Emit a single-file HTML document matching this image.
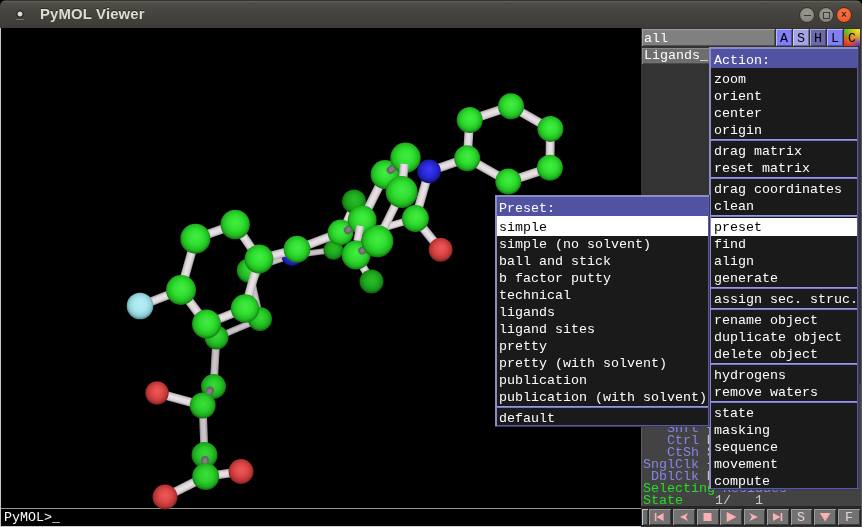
<!DOCTYPE html>
<html><head><meta charset="utf-8"><title>PyMOL Viewer</title>
<style>
html,body{margin:0;padding:0;background:#000;}
body{width:862px;height:527px;position:relative;overflow:hidden;font-family:"Liberation Mono",monospace;}
.t{will-change:transform;position:absolute;font-family:"Liberation Mono",monospace;font-size:13.333px;line-height:16px;height:16px;white-space:pre;letter-spacing:0;}
#title{position:absolute;left:0;top:0;width:862px;height:28px;background:linear-gradient(#35342f 0,#35342f 1px,#62615a 1px,#62615a 2px,#504f49 2px,#464540 40%,#3c3b37 100%);border-radius:6px 6px 0 0;}
#title .name{will-change:transform;position:absolute;left:40px;top:6px;font:bold 14.9px "Liberation Sans",sans-serif;color:#dfdbd2;letter-spacing:.15px;text-shadow:0 -1px 0 rgba(0,0,0,.4)}
.wb{will-change:transform;position:absolute;top:6.8px;width:16px;height:16px;border-radius:50%;box-sizing:border-box}
.mol{position:absolute;left:0;top:0}
#view{position:absolute;left:1px;top:28px;width:640px;height:480px;background:#000;overflow:hidden}
</style></head><body>
<div id="title">
  <div style="position:absolute;left:14px;top:7.6px;width:12px;height:12px;border-radius:50%;background:radial-gradient(circle at 50% 50%,#e4e4e0 0,#d6d6d2 24%,#2c2b28 34%,#2c2b28 41%,rgba(60,59,55,0) 49%)"></div>
  <div style="position:absolute;left:16px;top:18.6px;width:8px;height:1px;background:#9c9c96;opacity:.6;border-radius:1px"></div>
  <div class="name">PyMOL Viewer</div>
  <div class="wb" style="left:799.2px;background:radial-gradient(circle at 50% 35%,#9a9a92,#7c7c75);border:1px solid #33322e"><div style="position:absolute;left:3.5px;top:6.5px;width:7px;height:1px;background:#3c3b37"></div></div>
  <div class="wb" style="left:817.9px;background:radial-gradient(circle at 50% 35%,#9a9a92,#7c7c75);border:1px solid #33322e"><div style="position:absolute;left:3.5px;top:3.5px;width:5px;height:5px;border:1px solid #3c3b37"></div></div>
  <div class="wb" style="left:835.7px;background:radial-gradient(circle at 50% 35%,#f67a4c,#e9501f);border:1px solid #5c2410;color:#4a1a0a;font:bold 10px/14px 'Liberation Sans',sans-serif;text-align:center">×</div>
</div>
<div style="position:absolute;left:0;top:28px;width:1px;height:499px;background:#c4c4c4"></div>
<div style="position:absolute;left:0;top:526px;width:862px;height:1px;background:#cdcdcd"></div>
<div style="position:absolute;left:861px;top:28px;width:1px;height:499px;background:#5a5a5a"></div>
<div style="position:absolute;left:1px;top:508px;width:641px;height:1px;background:#969696"></div>
<svg class="mol" width="862" height="527" viewBox="0 0 862 527">
<defs>
<radialGradient id="gg" cx="0.5" cy="0.47" r="0.53" fx="0.52" fy="0.42"><stop offset="0" stop-color="#42ee42"/><stop offset="0.5" stop-color="#30de30"/><stop offset="0.8" stop-color="#20bc20"/><stop offset="1" stop-color="#127412"/></radialGradient>
<radialGradient id="ggn" cx="0.5" cy="0.47" r="0.53" fx="0.52" fy="0.42"><stop offset="0" stop-color="#3ae23a"/><stop offset="0.5" stop-color="#2cd02c"/><stop offset="0.8" stop-color="#1eae1e"/><stop offset="1" stop-color="#106a10"/></radialGradient>
<radialGradient id="ggm" cx="0.5" cy="0.47" r="0.53" fx="0.52" fy="0.42"><stop offset="0" stop-color="#36da36"/><stop offset="0.5" stop-color="#28c628"/><stop offset="0.8" stop-color="#1ba41b"/><stop offset="1" stop-color="#0e620e"/></radialGradient>
<radialGradient id="ggd" cx="0.5" cy="0.47" r="0.53" fx="0.52" fy="0.42"><stop offset="0" stop-color="#28be28"/><stop offset="0.5" stop-color="#1fac1f"/><stop offset="0.8" stop-color="#168e16"/><stop offset="1" stop-color="#0a540a"/></radialGradient>
<radialGradient id="gr" cx="0.5" cy="0.47" r="0.53" fx="0.52" fy="0.42"><stop offset="0" stop-color="#ee5a5a"/><stop offset="0.5" stop-color="#dc4646"/><stop offset="0.8" stop-color="#b83434"/><stop offset="1" stop-color="#742020"/></radialGradient>
<radialGradient id="gb" cx="0.5" cy="0.47" r="0.53" fx="0.52" fy="0.42"><stop offset="0" stop-color="#3a3af2"/><stop offset="0.5" stop-color="#2a2adc"/><stop offset="0.8" stop-color="#1e1eb4"/><stop offset="1" stop-color="#0e0e6c"/></radialGradient>
<radialGradient id="gc" cx="0.5" cy="0.47" r="0.53" fx="0.52" fy="0.42"><stop offset="0" stop-color="#b6f0f6"/><stop offset="0.5" stop-color="#a8e6ee"/><stop offset="0.8" stop-color="#8ccdd5"/><stop offset="1" stop-color="#52848a"/></radialGradient>
</defs>
<line x1="258" y1="267" x2="292.0" y2="255.5" stroke="#989296" stroke-width="6.00"/>
<line x1="258" y1="267" x2="292.0" y2="255.5" stroke="#bcb6ba" stroke-width="4.56"/>
<line x1="258" y1="267" x2="292.0" y2="255.5" stroke="#cbc5c9" stroke-width="2.40"/>
<line x1="253" y1="285" x2="259" y2="312" stroke="#989296" stroke-width="6.00"/>
<line x1="253" y1="285" x2="259" y2="312" stroke="#bcb6ba" stroke-width="4.56"/>
<line x1="253" y1="285" x2="259" y2="312" stroke="#cbc5c9" stroke-width="2.40"/>
<line x1="260.0" y1="319.0" x2="216.5" y2="337.5" stroke="#989296" stroke-width="6.50"/>
<line x1="260.0" y1="319.0" x2="216.5" y2="337.5" stroke="#bcb6ba" stroke-width="4.94"/>
<line x1="260.0" y1="319.0" x2="216.5" y2="337.5" stroke="#cbc5c9" stroke-width="2.60"/>
<line x1="216.5" y1="337.5" x2="213.5" y2="386.5" stroke="#989296" stroke-width="7.80"/>
<line x1="216.5" y1="337.5" x2="213.5" y2="386.5" stroke="#bcb6ba" stroke-width="5.93"/>
<line x1="216.5" y1="337.5" x2="213.5" y2="386.5" stroke="#cbc5c9" stroke-width="3.12"/>
<circle cx="249.0" cy="270.5" r="12.2" fill="url(#ggm)"/>
<circle cx="260.0" cy="319.0" r="12.0" fill="url(#ggm)"/>
<circle cx="216.5" cy="337.5" r="12.0" fill="url(#ggm)"/>
<circle cx="213.5" cy="386.5" r="12.5" fill="url(#ggm)"/>
<line x1="210" y1="390.5" x2="202.7" y2="405.5" stroke="#6a6468" stroke-width="8.0" stroke-linecap="round"/>
<line x1="210" y1="390.5" x2="202.7" y2="405.5" stroke="#847e82" stroke-width="4.0" stroke-linecap="round"/>
<line x1="157.0" y1="393.0" x2="202.7" y2="405.5" stroke="#b4acb0" stroke-width="8.80"/>
<line x1="157.0" y1="393.0" x2="202.7" y2="405.5" stroke="#d6ced2" stroke-width="6.69"/>
<line x1="157.0" y1="393.0" x2="202.7" y2="405.5" stroke="#e6e0e4" stroke-width="3.52"/>
<line x1="202.7" y1="405.5" x2="204.5" y2="455.0" stroke="#989296" stroke-width="7.80"/>
<line x1="202.7" y1="405.5" x2="204.5" y2="455.0" stroke="#bcb6ba" stroke-width="5.93"/>
<line x1="202.7" y1="405.5" x2="204.5" y2="455.0" stroke="#cbc5c9" stroke-width="3.12"/>
<circle cx="157.0" cy="393.0" r="11.7" fill="url(#gr)"/>
<circle cx="202.7" cy="405.5" r="13.0" fill="url(#ggn)"/>
<circle cx="204.5" cy="455.0" r="13.0" fill="url(#ggm)"/>
<line x1="205" y1="460" x2="205.7" y2="476.5" stroke="#6a6468" stroke-width="8.0" stroke-linecap="round"/>
<line x1="205" y1="460" x2="205.7" y2="476.5" stroke="#847e82" stroke-width="4.0" stroke-linecap="round"/>
<line x1="205.7" y1="476.5" x2="241.0" y2="471.5" stroke="#b4acb0" stroke-width="8.80"/>
<line x1="205.7" y1="476.5" x2="241.0" y2="471.5" stroke="#d6ced2" stroke-width="6.69"/>
<line x1="205.7" y1="476.5" x2="241.0" y2="471.5" stroke="#e6e0e4" stroke-width="3.52"/>
<line x1="205.7" y1="476.5" x2="165.0" y2="497.0" stroke="#b4acb0" stroke-width="8.80"/>
<line x1="205.7" y1="476.5" x2="165.0" y2="497.0" stroke="#d6ced2" stroke-width="6.69"/>
<line x1="205.7" y1="476.5" x2="165.0" y2="497.0" stroke="#e6e0e4" stroke-width="3.52"/>
<circle cx="205.7" cy="476.5" r="13.5" fill="url(#ggn)"/>
<circle cx="241.0" cy="471.5" r="12.5" fill="url(#gr)"/>
<circle cx="165.0" cy="497.0" r="12.5" fill="url(#gr)"/>
<line x1="195.4" y1="238.7" x2="235.2" y2="224.5" stroke="#b4acb0" stroke-width="8.80"/>
<line x1="195.4" y1="238.7" x2="235.2" y2="224.5" stroke="#d6ced2" stroke-width="6.69"/>
<line x1="195.4" y1="238.7" x2="235.2" y2="224.5" stroke="#e6e0e4" stroke-width="3.52"/>
<line x1="235.2" y1="224.5" x2="259.0" y2="259.0" stroke="#b4acb0" stroke-width="8.80"/>
<line x1="235.2" y1="224.5" x2="259.0" y2="259.0" stroke="#d6ced2" stroke-width="6.69"/>
<line x1="235.2" y1="224.5" x2="259.0" y2="259.0" stroke="#e6e0e4" stroke-width="3.52"/>
<line x1="259.0" y1="259.0" x2="245.0" y2="308.5" stroke="#b4acb0" stroke-width="8.80"/>
<line x1="259.0" y1="259.0" x2="245.0" y2="308.5" stroke="#d6ced2" stroke-width="6.69"/>
<line x1="259.0" y1="259.0" x2="245.0" y2="308.5" stroke="#e6e0e4" stroke-width="3.52"/>
<line x1="245.0" y1="308.5" x2="206.5" y2="324.0" stroke="#b4acb0" stroke-width="8.80"/>
<line x1="245.0" y1="308.5" x2="206.5" y2="324.0" stroke="#d6ced2" stroke-width="6.69"/>
<line x1="245.0" y1="308.5" x2="206.5" y2="324.0" stroke="#e6e0e4" stroke-width="3.52"/>
<line x1="206.5" y1="324.0" x2="181.0" y2="290.0" stroke="#b4acb0" stroke-width="8.80"/>
<line x1="206.5" y1="324.0" x2="181.0" y2="290.0" stroke="#d6ced2" stroke-width="6.69"/>
<line x1="206.5" y1="324.0" x2="181.0" y2="290.0" stroke="#e6e0e4" stroke-width="3.52"/>
<line x1="181.0" y1="290.0" x2="195.4" y2="238.7" stroke="#b4acb0" stroke-width="8.80"/>
<line x1="181.0" y1="290.0" x2="195.4" y2="238.7" stroke="#d6ced2" stroke-width="6.69"/>
<line x1="181.0" y1="290.0" x2="195.4" y2="238.7" stroke="#e6e0e4" stroke-width="3.52"/>
<line x1="181.0" y1="290.0" x2="140.0" y2="306.0" stroke="#b4acb0" stroke-width="8.80"/>
<line x1="181.0" y1="290.0" x2="140.0" y2="306.0" stroke="#d6ced2" stroke-width="6.69"/>
<line x1="181.0" y1="290.0" x2="140.0" y2="306.0" stroke="#e6e0e4" stroke-width="3.52"/>
<line x1="292.0" y1="255.5" x2="333.4" y2="250.0" stroke="#989296" stroke-width="6.00"/>
<line x1="292.0" y1="255.5" x2="333.4" y2="250.0" stroke="#bcb6ba" stroke-width="4.56"/>
<line x1="292.0" y1="255.5" x2="333.4" y2="250.0" stroke="#cbc5c9" stroke-width="2.40"/>
<line x1="354.0" y1="201.5" x2="340.5" y2="232.5" stroke="#b4acb0" stroke-width="5.00"/>
<line x1="354.0" y1="201.5" x2="340.5" y2="232.5" stroke="#d6ced2" stroke-width="3.80"/>
<line x1="354.0" y1="201.5" x2="340.5" y2="232.5" stroke="#e6e0e4" stroke-width="2.00"/>
<line x1="356.1" y1="255.0" x2="371.5" y2="281.5" stroke="#b4acb0" stroke-width="8.00"/>
<line x1="356.1" y1="255.0" x2="371.5" y2="281.5" stroke="#d6ced2" stroke-width="6.08"/>
<line x1="356.1" y1="255.0" x2="371.5" y2="281.5" stroke="#e6e0e4" stroke-width="3.20"/>
<circle cx="333.4" cy="250.0" r="10.0" fill="url(#ggd)"/>
<circle cx="354.0" cy="201.5" r="12.0" fill="url(#ggd)"/>
<circle cx="371.5" cy="281.5" r="12.0" fill="url(#ggd)"/>
<circle cx="292.0" cy="255.5" r="10.6" fill="url(#gb)"/>
<line x1="259.0" y1="259.0" x2="297.0" y2="249.2" stroke="#b4acb0" stroke-width="8.80"/>
<line x1="259.0" y1="259.0" x2="297.0" y2="249.2" stroke="#d6ced2" stroke-width="6.69"/>
<line x1="259.0" y1="259.0" x2="297.0" y2="249.2" stroke="#e6e0e4" stroke-width="3.52"/>
<circle cx="195.4" cy="238.7" r="15.0" fill="url(#gg)"/>
<circle cx="235.2" cy="224.5" r="14.7" fill="url(#gg)"/>
<circle cx="259.0" cy="259.0" r="14.4" fill="url(#gg)"/>
<circle cx="245.0" cy="308.5" r="14.2" fill="url(#gg)"/>
<circle cx="206.5" cy="324.0" r="14.5" fill="url(#gg)"/>
<circle cx="181.0" cy="290.0" r="15.0" fill="url(#gg)"/>
<circle cx="140.0" cy="306.0" r="13.3" fill="url(#gc)"/>
<line x1="297.0" y1="249.2" x2="340.5" y2="232.5" stroke="#b4acb0" stroke-width="8.80"/>
<line x1="297.0" y1="249.2" x2="340.5" y2="232.5" stroke="#d6ced2" stroke-width="6.69"/>
<line x1="297.0" y1="249.2" x2="340.5" y2="232.5" stroke="#e6e0e4" stroke-width="3.52"/>
<circle cx="340.5" cy="232.5" r="12.9" fill="url(#gg)"/>
<circle cx="297.0" cy="249.2" r="13.4" fill="url(#gg)"/>
<line x1="385.0" y1="174.5" x2="362.2" y2="220.0" stroke="#b4acb0" stroke-width="8.80"/>
<line x1="385.0" y1="174.5" x2="362.2" y2="220.0" stroke="#d6ced2" stroke-width="6.69"/>
<line x1="385.0" y1="174.5" x2="362.2" y2="220.0" stroke="#e6e0e4" stroke-width="3.52"/>
<circle cx="385.0" cy="174.5" r="14.4" fill="url(#gg)"/>
<line x1="347.8" y1="230.2" x2="362.2" y2="220.0" stroke="#6a6468" stroke-width="8.0" stroke-linecap="round"/>
<line x1="347.8" y1="230.2" x2="362.2" y2="220.0" stroke="#847e82" stroke-width="4.0" stroke-linecap="round"/>
<line x1="415.4" y1="218.5" x2="372" y2="231" stroke="#b4acb0" stroke-width="7.40"/>
<line x1="415.4" y1="218.5" x2="372" y2="231" stroke="#d6ced2" stroke-width="5.62"/>
<line x1="415.4" y1="218.5" x2="372" y2="231" stroke="#e6e0e4" stroke-width="2.96"/>
<line x1="429.0" y1="171.4" x2="415.4" y2="218.5" stroke="#b4acb0" stroke-width="8.80"/>
<line x1="429.0" y1="171.4" x2="415.4" y2="218.5" stroke="#d6ced2" stroke-width="6.69"/>
<line x1="429.0" y1="171.4" x2="415.4" y2="218.5" stroke="#e6e0e4" stroke-width="3.52"/>
<line x1="429.0" y1="171.4" x2="467.2" y2="158.2" stroke="#b4acb0" stroke-width="8.80"/>
<line x1="429.0" y1="171.4" x2="467.2" y2="158.2" stroke="#d6ced2" stroke-width="6.69"/>
<line x1="429.0" y1="171.4" x2="467.2" y2="158.2" stroke="#e6e0e4" stroke-width="3.52"/>
<line x1="415.4" y1="218.5" x2="440.6" y2="249.7" stroke="#b4acb0" stroke-width="8.80"/>
<line x1="415.4" y1="218.5" x2="440.6" y2="249.7" stroke="#d6ced2" stroke-width="6.69"/>
<line x1="415.4" y1="218.5" x2="440.6" y2="249.7" stroke="#e6e0e4" stroke-width="3.52"/>
<line x1="467.2" y1="158.2" x2="469.7" y2="120.0" stroke="#b4acb0" stroke-width="8.80"/>
<line x1="467.2" y1="158.2" x2="469.7" y2="120.0" stroke="#d6ced2" stroke-width="6.69"/>
<line x1="467.2" y1="158.2" x2="469.7" y2="120.0" stroke="#e6e0e4" stroke-width="3.52"/>
<line x1="469.7" y1="120.0" x2="511.0" y2="106.3" stroke="#b4acb0" stroke-width="8.80"/>
<line x1="469.7" y1="120.0" x2="511.0" y2="106.3" stroke="#d6ced2" stroke-width="6.69"/>
<line x1="469.7" y1="120.0" x2="511.0" y2="106.3" stroke="#e6e0e4" stroke-width="3.52"/>
<line x1="511.0" y1="106.3" x2="550.4" y2="128.9" stroke="#b4acb0" stroke-width="8.80"/>
<line x1="511.0" y1="106.3" x2="550.4" y2="128.9" stroke="#d6ced2" stroke-width="6.69"/>
<line x1="511.0" y1="106.3" x2="550.4" y2="128.9" stroke="#e6e0e4" stroke-width="3.52"/>
<line x1="550.4" y1="128.9" x2="549.9" y2="167.7" stroke="#b4acb0" stroke-width="8.80"/>
<line x1="550.4" y1="128.9" x2="549.9" y2="167.7" stroke="#d6ced2" stroke-width="6.69"/>
<line x1="550.4" y1="128.9" x2="549.9" y2="167.7" stroke="#e6e0e4" stroke-width="3.52"/>
<line x1="549.9" y1="167.7" x2="508.3" y2="181.5" stroke="#b4acb0" stroke-width="8.80"/>
<line x1="549.9" y1="167.7" x2="508.3" y2="181.5" stroke="#d6ced2" stroke-width="6.69"/>
<line x1="549.9" y1="167.7" x2="508.3" y2="181.5" stroke="#e6e0e4" stroke-width="3.52"/>
<line x1="508.3" y1="181.5" x2="467.2" y2="158.2" stroke="#b4acb0" stroke-width="8.80"/>
<line x1="508.3" y1="181.5" x2="467.2" y2="158.2" stroke="#d6ced2" stroke-width="6.69"/>
<line x1="508.3" y1="181.5" x2="467.2" y2="158.2" stroke="#e6e0e4" stroke-width="3.52"/>
<circle cx="467.2" cy="158.2" r="13.0" fill="url(#gg)"/>
<circle cx="469.7" cy="120.0" r="13.0" fill="url(#gg)"/>
<circle cx="511.0" cy="106.3" r="13.0" fill="url(#gg)"/>
<circle cx="550.4" cy="128.9" r="13.0" fill="url(#gg)"/>
<circle cx="549.9" cy="167.7" r="13.0" fill="url(#gg)"/>
<circle cx="508.3" cy="181.5" r="13.0" fill="url(#gg)"/>
<circle cx="429.0" cy="171.4" r="11.8" fill="url(#gb)"/>
<circle cx="415.4" cy="218.5" r="13.5" fill="url(#gg)"/>
<circle cx="440.6" cy="249.7" r="12.0" fill="url(#gr)"/>
<circle cx="362.2" cy="220.0" r="14.4" fill="url(#gg)"/>
<line x1="360.3" y1="226" x2="357.3" y2="241" stroke="#b4acb0" stroke-width="8.00"/>
<line x1="360.3" y1="226" x2="357.3" y2="241" stroke="#d6ced2" stroke-width="6.08"/>
<line x1="360.3" y1="226" x2="357.3" y2="241" stroke="#e6e0e4" stroke-width="3.20"/>
<circle cx="356.1" cy="255.0" r="14.4" fill="url(#gg)"/>
<line x1="362.2" y1="250.6" x2="377.4" y2="241.3" stroke="#6a6468" stroke-width="8.0" stroke-linecap="round"/>
<line x1="362.2" y1="250.6" x2="377.4" y2="241.3" stroke="#847e82" stroke-width="4.0" stroke-linecap="round"/>
<line x1="390.6" y1="170" x2="405.5" y2="157.8" stroke="#6a6468" stroke-width="8.0" stroke-linecap="round"/>
<line x1="390.6" y1="170" x2="405.5" y2="157.8" stroke="#847e82" stroke-width="4.0" stroke-linecap="round"/>
<circle cx="405.5" cy="157.8" r="15.2" fill="url(#gg)"/>
<line x1="404.3" y1="164" x2="401.7" y2="192.0" stroke="#b4acb0" stroke-width="8.60"/>
<line x1="404.3" y1="164" x2="401.7" y2="192.0" stroke="#d6ced2" stroke-width="6.54"/>
<line x1="404.3" y1="164" x2="401.7" y2="192.0" stroke="#e6e0e4" stroke-width="3.44"/>
<line x1="401.7" y1="192.0" x2="377.4" y2="241.3" stroke="#b4acb0" stroke-width="8.40"/>
<line x1="401.7" y1="192.0" x2="377.4" y2="241.3" stroke="#d6ced2" stroke-width="6.38"/>
<line x1="401.7" y1="192.0" x2="377.4" y2="241.3" stroke="#e6e0e4" stroke-width="3.36"/>
<circle cx="401.7" cy="192.0" r="16.0" fill="url(#gg)"/>
<circle cx="377.4" cy="241.3" r="16.0" fill="url(#gg)"/>
</svg>
<div class="t " style="left:4px;top:510px;color:#fff">PyMOL&gt;_</div>
<div style="position:absolute;left:641px;top:28px;width:220px;height:499px;background:#333333;"></div>
<div style="position:absolute;left:642px;top:29px;width:133px;height:17px;background:#808080;box-shadow:inset 1px 1px 0 #a0a0a0, inset -1px -1px 0 #505050"></div>
<div class="t " style="left:644px;top:31px;color:#fff">all</div>
<div style="position:absolute;left:776px;top:29px;width:16px;height:17px;background:#8080f4;box-shadow:inset 1px 1px 0 rgba(255,255,255,.45), inset -1px -1px 0 rgba(0,0,0,.35)"></div>
<div class="t " style="left:780px;top:31px;color:#000010">A</div>
<div style="position:absolute;left:793px;top:29px;width:16px;height:17px;background:#a4a4e4;box-shadow:inset 1px 1px 0 rgba(255,255,255,.45), inset -1px -1px 0 rgba(0,0,0,.35)"></div>
<div class="t " style="left:797px;top:31px;color:#000010">S</div>
<div style="position:absolute;left:810px;top:29px;width:16px;height:17px;background:#6a6aa8;box-shadow:inset 1px 1px 0 rgba(255,255,255,.45), inset -1px -1px 0 rgba(0,0,0,.35)"></div>
<div class="t " style="left:814px;top:31px;color:#000010">H</div>
<div style="position:absolute;left:827px;top:29px;width:16px;height:17px;background:#8080f4;box-shadow:inset 1px 1px 0 rgba(255,255,255,.45), inset -1px -1px 0 rgba(0,0,0,.35)"></div>
<div class="t " style="left:831px;top:31px;color:#000010">L</div>
<div style="position:absolute;left:844px;top:29px;width:16px;height:17px;background:linear-gradient(45deg,#e42020 0%,rgba(240,140,20,0) 50%,#f0f020 100%),linear-gradient(135deg,#20d420 0%,#f09020 50%,#4c20d8 100%);"></div>
<div class="t " style="left:848px;top:31px;color:#000">C</div>
<div style="position:absolute;left:642px;top:48px;width:68px;height:16px;background:#6e6e6e;box-shadow:inset 1px 1px 0 #8c8c8c, inset -1px -1px 0 #484848"></div>
<div class="t " style="left:644px;top:48px;color:#fff">Ligands_</div>
<div style="position:absolute;left:642px;top:384px;width:219px;height:122px;background:#434343;"></div>
<div style="position:absolute;left:641px;top:384px;width:1px;height:122px;background:#5c5c5c;"></div>
<div class="t" style="left:643px;top:421px;color:#8686e6">   Shft</div>
<div class="t" style="left:707px;top:421px;color:#d0d0d0">+Box -Box Clip MovS</div>
<div class="t" style="left:643px;top:433px;color:#8686e6">   Ctrl</div>
<div class="t" style="left:707px;top:433px;color:#d0d0d0">Move PkAt Pk1  MvSZ</div>
<div class="t" style="left:643px;top:445px;color:#8686e6">   CtSh</div>
<div class="t" style="left:707px;top:445px;color:#d0d0d0">Sele Orig Clip MovZ</div>
<div class="t" style="left:643px;top:457px;color:#8686e6">SnglClk</div>
<div class="t" style="left:707px;top:457px;color:#d0d0d0">+/-  Cent Menu</div>
<div class="t" style="left:643px;top:469px;color:#8686e6"> DblClk</div>
<div class="t" style="left:707px;top:469px;color:#d0d0d0">Menu  -   PkAt</div>
<div class="t " style="left:643px;top:481px;color:#22e022">Selecting</div>
<div class="t " style="left:723px;top:481px;color:#8686e6">Residues</div>
<div class="t " style="left:643px;top:493px;color:#22e022">State</div>
<div class="t " style="left:715px;top:493px;color:#c8c8c8">1/   1</div>
<div style="position:absolute;left:641px;top:506px;width:220px;height:20px;background:#262626;"></div>
<div style="position:absolute;left:642px;top:509px;width:6px;height:16px;background:#6c6c6c;box-shadow:inset 1px 1px 0 #c8c8c8, inset -1px -1px 0 #404040"></div>
<div style="position:absolute;left:649px;top:509px;width:22px;height:16px;background:#727272;box-shadow:inset 1px 1px 0 #9c9c9c, inset -1px -1px 0 #3c3c3c"></div>
<svg style="position:absolute;left:0;top:0" width="862" height="527"><rect x="654.8" y="513" width="1.6" height="8" fill="#f8b0b0"/><polygon points="656.4,517 663.6,513 663.6,521" fill="#f8b0b0"/></svg>
<div style="position:absolute;left:673px;top:509px;width:22px;height:16px;background:#727272;box-shadow:inset 1px 1px 0 #9c9c9c, inset -1px -1px 0 #3c3c3c"></div>
<svg style="position:absolute;left:0;top:0" width="862" height="527"><polygon points="680.0,517 688.3,513 685.8,517 688.3,521" fill="#f8b0b0"/></svg>
<div style="position:absolute;left:697px;top:509px;width:22px;height:16px;background:#727272;box-shadow:inset 1px 1px 0 #9c9c9c, inset -1px -1px 0 #3c3c3c"></div>
<svg style="position:absolute;left:0;top:0" width="862" height="527"><rect x="703.5" y="513" width="8" height="8" fill="#f8b0b0"/></svg>
<div style="position:absolute;left:720px;top:509px;width:22px;height:16px;background:#727272;box-shadow:inset 1px 1px 0 #9c9c9c, inset -1px -1px 0 #3c3c3c"></div>
<svg style="position:absolute;left:0;top:0" width="862" height="527"><polygon points="726.7,512 736.5,517 726.7,522" fill="#f8b0b0"/></svg>
<div style="position:absolute;left:744px;top:509px;width:21px;height:16px;background:#727272;box-shadow:inset 1px 1px 0 #9c9c9c, inset -1px -1px 0 #3c3c3c"></div>
<svg style="position:absolute;left:0;top:0" width="862" height="527"><polygon points="758.0,517 749.3,513 751.8,517 749.3,521" fill="#f8b0b0"/></svg>
<div style="position:absolute;left:767px;top:509px;width:22px;height:16px;background:#727272;box-shadow:inset 1px 1px 0 #9c9c9c, inset -1px -1px 0 #3c3c3c"></div>
<svg style="position:absolute;left:0;top:0" width="862" height="527"><rect x="780.6" y="513" width="1.7" height="8" fill="#f8b0b0"/><polygon points="780.6,517 773.0,513 773.0,521" fill="#f8b0b0"/></svg>
<div style="position:absolute;left:791px;top:509px;width:21px;height:16px;background:#727272;box-shadow:inset 1px 1px 0 #9c9c9c, inset -1px -1px 0 #3c3c3c"></div>
<div class="t " style="left:797.0px;top:510px;color:#e8d0d0">S</div>
<div style="position:absolute;left:814px;top:509px;width:22px;height:16px;background:#727272;box-shadow:inset 1px 1px 0 #9c9c9c, inset -1px -1px 0 #3c3c3c"></div>
<svg style="position:absolute;left:0;top:0" width="862" height="527"><polygon points="819.8,513 830.5,513 825.15,521.6" fill="#f8b0b0"/></svg>
<div style="position:absolute;left:838px;top:509px;width:22px;height:16px;background:#727272;box-shadow:inset 1px 1px 0 #9c9c9c, inset -1px -1px 0 #3c3c3c"></div>
<div class="t " style="left:844.5px;top:510px;color:#e8d0d0">F</div>
<div style="position:absolute;left:709px;top:47px;width:150px;height:443px;background:#1a1a1a;"></div>
<div style="position:absolute;left:711px;top:49px;width:146px;height:19px;background:#5252a2;"></div>
<div class="t " style="left:714px;top:53px;color:#fff">Action:</div>
<div class="t " style="left:714px;top:72px;color:#fff">zoom</div>
<div class="t " style="left:714px;top:89px;color:#fff">orient</div>
<div class="t " style="left:714px;top:106px;color:#fff">center</div>
<div class="t " style="left:714px;top:123px;color:#fff">origin</div>
<div class="t " style="left:714px;top:144px;color:#fff">drag matrix</div>
<div class="t " style="left:714px;top:161px;color:#fff">reset matrix</div>
<div class="t " style="left:714px;top:182px;color:#fff">drag coordinates</div>
<div class="t " style="left:714px;top:199px;color:#fff">clean</div>
<div style="position:absolute;left:711px;top:216px;width:146px;height:20px;background:#ffffff;"></div>
<div class="t " style="left:714px;top:220px;color:#000">preset</div>
<div class="t " style="left:714px;top:237px;color:#fff">find</div>
<div class="t " style="left:714px;top:254px;color:#fff">align</div>
<div class="t " style="left:714px;top:271px;color:#fff">generate</div>
<div class="t " style="left:714px;top:292px;color:#fff">assign sec. struc.</div>
<div class="t " style="left:714px;top:313px;color:#fff">rename object</div>
<div class="t " style="left:714px;top:330px;color:#fff">duplicate object</div>
<div class="t " style="left:714px;top:347px;color:#fff">delete object</div>
<div class="t " style="left:714px;top:368px;color:#fff">hydrogens</div>
<div class="t " style="left:714px;top:385px;color:#fff">remove waters</div>
<div class="t " style="left:714px;top:406px;color:#fff">state</div>
<div class="t " style="left:714px;top:423px;color:#fff">masking</div>
<div class="t " style="left:714px;top:440px;color:#fff">sequence</div>
<div class="t " style="left:714px;top:457px;color:#fff">movement</div>
<div class="t " style="left:714px;top:474px;color:#fff">compute</div>
<div style="position:absolute;left:711px;top:138px;width:146px;height:4px;background:#15153a;"></div>
<div style="position:absolute;left:711px;top:139px;width:146px;height:1px;background:#9a9acc;"></div>
<div style="position:absolute;left:711px;top:140px;width:146px;height:1px;background:#7c7cb0;"></div>
<div style="position:absolute;left:711px;top:176px;width:146px;height:4px;background:#15153a;"></div>
<div style="position:absolute;left:711px;top:177px;width:146px;height:1px;background:#9a9acc;"></div>
<div style="position:absolute;left:711px;top:178px;width:146px;height:1px;background:#7c7cb0;"></div>
<div style="position:absolute;left:711px;top:214px;width:146px;height:4px;background:#15153a;"></div>
<div style="position:absolute;left:711px;top:215px;width:146px;height:1px;background:#9a9acc;"></div>
<div style="position:absolute;left:711px;top:216px;width:146px;height:1px;background:#7c7cb0;"></div>
<div style="position:absolute;left:711px;top:286px;width:146px;height:4px;background:#15153a;"></div>
<div style="position:absolute;left:711px;top:287px;width:146px;height:1px;background:#9a9acc;"></div>
<div style="position:absolute;left:711px;top:288px;width:146px;height:1px;background:#7c7cb0;"></div>
<div style="position:absolute;left:711px;top:307px;width:146px;height:4px;background:#15153a;"></div>
<div style="position:absolute;left:711px;top:308px;width:146px;height:1px;background:#9a9acc;"></div>
<div style="position:absolute;left:711px;top:309px;width:146px;height:1px;background:#7c7cb0;"></div>
<div style="position:absolute;left:711px;top:362px;width:146px;height:4px;background:#15153a;"></div>
<div style="position:absolute;left:711px;top:363px;width:146px;height:1px;background:#9a9acc;"></div>
<div style="position:absolute;left:711px;top:364px;width:146px;height:1px;background:#7c7cb0;"></div>
<div style="position:absolute;left:711px;top:400px;width:146px;height:4px;background:#15153a;"></div>
<div style="position:absolute;left:711px;top:401px;width:146px;height:1px;background:#9a9acc;"></div>
<div style="position:absolute;left:711px;top:402px;width:146px;height:1px;background:#7c7cb0;"></div>
<div style="position:absolute;left:857px;top:47px;width:1px;height:443px;background:#5a5a98;"></div>
<div style="position:absolute;left:858px;top:47px;width:1px;height:443px;background:#36366a;"></div>
<div style="position:absolute;left:709px;top:488px;width:150px;height:1px;background:#5a5a98;"></div>
<div style="position:absolute;left:709px;top:489px;width:150px;height:1px;background:#36366a;"></div>
<div style="position:absolute;left:709px;top:47px;width:2px;height:442px;background:#8c8cc4;"></div>
<div style="position:absolute;left:709px;top:47px;width:149px;height:2px;background:#8c8cc4;"></div>
<div style="position:absolute;left:495px;top:195px;width:215px;height:232px;background:#1a1a1a;"></div>
<div style="position:absolute;left:497px;top:197px;width:211px;height:19px;background:#5252a2;"></div>
<div class="t " style="left:499px;top:201px;color:#fff">Preset:</div>
<div style="position:absolute;left:497px;top:216px;width:211px;height:20px;background:#ffffff;"></div>
<div class="t " style="left:499px;top:220px;color:#000">simple</div>
<div class="t " style="left:499px;top:237px;color:#fff">simple (no solvent)</div>
<div class="t " style="left:499px;top:254px;color:#fff">ball and stick</div>
<div class="t " style="left:499px;top:271px;color:#fff">b factor putty</div>
<div class="t " style="left:499px;top:288px;color:#fff">technical</div>
<div class="t " style="left:499px;top:305px;color:#fff">ligands</div>
<div class="t " style="left:499px;top:322px;color:#fff">ligand sites</div>
<div class="t " style="left:499px;top:339px;color:#fff">pretty</div>
<div class="t " style="left:499px;top:356px;color:#fff">pretty (with solvent)</div>
<div class="t " style="left:499px;top:373px;color:#fff">publication</div>
<div class="t " style="left:499px;top:390px;color:#fff">publication (with solvent)</div>
<div class="t " style="left:499px;top:411px;color:#fff">default</div>
<div style="position:absolute;left:497px;top:405px;width:211px;height:4px;background:#15153a;"></div>
<div style="position:absolute;left:497px;top:406px;width:211px;height:1px;background:#9a9acc;"></div>
<div style="position:absolute;left:497px;top:407px;width:211px;height:1px;background:#7c7cb0;"></div>
<div style="position:absolute;left:708px;top:195px;width:1px;height:232px;background:#5a5a98;"></div>
<div style="position:absolute;left:709px;top:195px;width:1px;height:232px;background:#36366a;"></div>
<div style="position:absolute;left:495px;top:425px;width:215px;height:1px;background:#5a5a98;"></div>
<div style="position:absolute;left:495px;top:426px;width:215px;height:1px;background:#36366a;"></div>
<div style="position:absolute;left:495px;top:195px;width:2px;height:231px;background:#8c8cc4;"></div>
<div style="position:absolute;left:495px;top:195px;width:214px;height:2px;background:#8c8cc4;"></div>
</body></html>
